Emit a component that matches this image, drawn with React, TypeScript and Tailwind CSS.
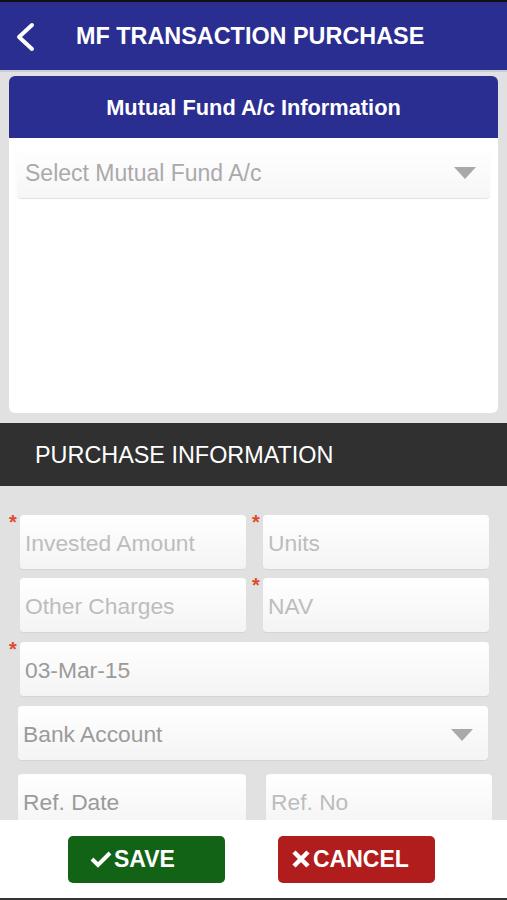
import React from 'react';

const font = { fontFamily: '"Liberation Sans", Arial, sans-serif' };

function Star() {
  return (
    <span className="absolute left-[-11px] top-[-3px] text-[20px] font-bold leading-none text-[#e0492b]">*</span>
  );
}

function Caret() {
  return (
    <svg width="22" height="12" viewBox="0 0 22 12" className="shrink-0">
      <polygon points="0,0 22,0 11,12" fill="#a9a9a9" />
    </svg>
  );
}

function Field({
  label,
  required,
  dark,
  caret,
  className = '',
}: {
  label: string;
  required?: boolean;
  dark?: boolean;
  caret?: boolean;
  className?: string;
}) {
  return (
    <div className={`relative ${className}`}>
      {required && <Star />}
      <div className="flex h-[54px] items-center justify-between rounded-[4px] bg-gradient-to-b from-white to-[#f4f4f4] pl-[5px] pr-[15px] pt-[3px] shadow-[0_1px_1px_rgba(0,0,0,0.06)]">
        <span className={`whitespace-nowrap text-[22.8px] ${dark ? 'text-[#9b9b9b]' : 'text-[#bdbdbd]'}`}>{label}</span>
        {caret && <Caret />}
      </div>
    </div>
  );
}

export default function App() {
  return (
    <div className="flex h-[900px] w-[507px] flex-col overflow-hidden bg-[#e1e1e1]" style={font}>
      {/* top bar */}
      <div className="h-[2px] bg-[#111]" />
      <div className="flex h-[68px] items-center bg-[#2b2e91] pl-[14px] pt-[2px]">
        <svg width="22" height="30" viewBox="0 0 22 30">
          <polyline points="18,3 5,15 18,27" fill="none" stroke="white" strokeWidth="4" strokeLinecap="round" strokeLinejoin="round" />
        </svg>
        <h1 className="ml-[40px] whitespace-nowrap text-[23.4px] font-bold text-white">MF TRANSACTION PURCHASE</h1>
      </div>
      <div className="h-[2px] bg-[#c9cad8]" />

      {/* scroll area */}
      <div className="flex-1 overflow-hidden">
        <div className="px-[9px] pt-[4px]">
          <div className="h-[337px] overflow-hidden rounded-[6px] bg-white">
            <div className="flex h-[62px] items-center justify-center bg-[#2b2e91] pt-[2px]">
              <span className="text-[21.8px] font-bold text-white">Mutual Fund A/c Information</span>
            </div>
            <div className="px-[8px] pt-[9px]">
              <div className="flex h-[51px] items-center justify-between rounded-[4px] bg-gradient-to-b from-white to-[#f6f6f6] pl-[8px] pr-[14px] pt-[1px] shadow-[0_1px_1px_rgba(0,0,0,0.12)]">
                <span className="text-[23px] text-[#aaaaaa]">Select Mutual Fund A/c</span>
                <Caret />
              </div>
            </div>
          </div>
        </div>

        <div className="mt-[10px] flex h-[63px] items-center bg-[#303030] pl-[35px] pt-[2px]">
          <span className="text-[23.4px] text-white">PURCHASE INFORMATION</span>
        </div>

        <div className="flex flex-col gap-[9px] pl-[20px] pr-[18px] pt-[29px]">
          <div className="grid grid-cols-2 gap-[17px]">
            <Field label="Invested Amount" required />
            <Field label="Units" required />
          </div>
          <div className="grid grid-cols-2 gap-[17px]">
            <Field label="Other Charges" />
            <Field label="NAV" required />
          </div>
          <Field label="03-Mar-15" required dark className="mt-[1px]" />
          <Field label="Bank Account" dark caret className="ml-[-2px] mr-[1px] mt-[1px]" />
          <div className="ml-[-2px] mr-[-3px] mt-[5px] grid grid-cols-[228px_226px] gap-[20px]">
            <Field label="Ref. Date" dark />
            <Field label="Ref. No" />
          </div>
        </div>
      </div>

      {/* footer */}
      <div className="flex h-[78px] items-center justify-center gap-[53px] bg-white pr-[4px]">
        <button className="flex h-[47px] w-[157px] items-center rounded-[5px] bg-[#136316] pl-[22px] text-[23px] font-bold text-white">
          <svg width="22" height="18" viewBox="0 0 22 18" className="mr-[2px]">
            <polyline points="2,9 8,15 20,3" fill="none" stroke="white" strokeWidth="4" strokeLinejoin="miter" />
          </svg>
          SAVE
        </button>
        <button className="flex h-[47px] w-[157px] items-center rounded-[5px] bg-[#b11c1c] pl-[13px] text-[23px] font-bold text-white">
          <svg width="20" height="20" viewBox="0 0 20 20" className="mr-[2px]">
            <path d="M3 3 L17 17 M17 3 L3 17" stroke="white" strokeWidth="4.5" />
          </svg>
          CANCEL
        </button>
      </div>
      <div className="h-[2px] bg-[#333]" />
    </div>
  );
}
